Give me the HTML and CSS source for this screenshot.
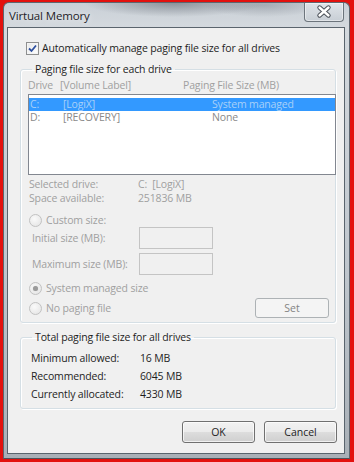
FILE: index.html
```html
<!DOCTYPE html>
<html lang="en">
<head>
  <meta charset="UTF-8">
  <title>Virtual Memory</title>
  <link rel="stylesheet" href="styles.css">
</head>
<body>
  <div class="window">
    <div class="titlebar">
      <span class="title">Virtual Memory</span>
      <span class="close">
        <svg width="38" height="18" viewBox="0 0 38 18">
          <path d="M14.5 4.5 L23.5 12.5 M23.5 4.5 L14.5 12.5" stroke="#4a5058" stroke-width="4.4" stroke-linecap="round"/>
          <path d="M14.5 4.5 L23.5 12.5 M23.5 4.5 L14.5 12.5" stroke="#ffffff" stroke-width="2.4" stroke-linecap="round"/>
        </svg>
      </span>
    </div>

    <div class="client">
      <div class="check-row">
        <span class="checkbox">
          <svg width="11" height="11" viewBox="0 0 11 11">
            <path d="M2 5.5 L4.5 8 L9 2.5" fill="none" stroke="#2d4f9e" stroke-width="1.8"/>
          </svg>
        </span>
        Automatically manage paging file size for all drives
      </div>

      <!-- Paging file per drive -->
      <fieldset class="group drives">
        <legend>Paging file size for each drive</legend>
        <div class="list-head">
          <span class="col-drive">Drive</span>
          <span class="col-label">[Volume Label]</span>
          <span class="col-size">Paging File Size (MB)</span>
        </div>
        <div class="listbox">
          <div class="row selected">
            <span class="cell-drive">C:</span>
            <span class="cell-label">[LogiX]</span>
            <span>System managed</span>
          </div>
          <div class="row">
            <span class="cell-drive">D:</span>
            <span class="cell-label">[RECOVERY]</span>
            <span>None</span>
          </div>
        </div>

        <div class="info">
          <span>Selected drive:</span><span>C:&nbsp; [LogiX]</span>
          <span>Space available:</span><span>251836 MB</span>
        </div>

        <div class="radio-row custom"><span class="radio"></span>Custom size:</div>
        <div class="field-row first"><span class="field-label">Initial size (MB):</span><span class="textbox"></span></div>
        <div class="field-row"><span class="field-label">Maximum size (MB):</span><span class="textbox"></span></div>
        <div class="radio-row managed"><span class="radio checked"></span>System managed size</div>
        <div class="radio-row nopaging">
          <span class="radio"></span>No paging file
          <button class="btn set" disabled>Set</button>
        </div>
      </fieldset>

      <!-- Totals -->
      <fieldset class="group totals">
        <legend>Total paging file size for all drives</legend>
        <div class="totals-grid">
          <span>Minimum allowed:</span><span>16 MB</span>
          <span>Recommended:</span><span>6045 MB</span>
          <span>Currently allocated:</span><span>4330 MB</span>
        </div>
      </fieldset>

      <div class="actions">
        <button class="btn">OK</button>
        <button class="btn">Cancel</button>
      </div>
    </div>
  </div>
</body>
</html>
```

FILE: styles.css
```css
/* Base */
body {
  margin: 0;
  padding: 2px 4px 3px 3px;
  background: #e3110e;
  font-family: 'Open Sans', sans-serif;
  font-size: 10.5px;
  letter-spacing: -0.15px;
  color: #1e1e1e;
}

/* Window frame (Aero-like glass) */
.window {
  width: 347px;
  height: 457px;
  box-sizing: border-box;
  border: 1px solid #5d666f;
  border-bottom-color: #4d555c;
  border-radius: 6px 6px 0 0;
  padding: 0 4px 4px 3px;
  display: flex;
  flex-direction: column;
  background:
    radial-gradient(ellipse 90px 14px at 170px 0, rgba(90,96,104,0.55), transparent),
    radial-gradient(ellipse 60px 12px at 260px 2px, rgba(110,116,124,0.4), transparent),
    linear-gradient(180deg, #c9d0d7 0, #d4d9de 24px, #bfc6cd 60%, #a9b0b7 100%);
}
.titlebar {
  height: 24px;
  display: flex;
  align-items: flex-start;
}
.title {
  padding: 5px 0 0 2px;
  font-size: 11.5px;
  color: #1f2328;
  text-shadow: 0 0 6px rgba(255,255,255,0.9);
}
.close {
  margin-left: auto;
  margin-right: 1px;
  width: 38px;
  height: 18px;
  border: 1px solid #6c747c;
  border-top: none;
  border-radius: 0 0 4px 4px;
  background: linear-gradient(180deg, rgba(240,243,246,0.6), rgba(190,198,206,0.5));
  box-shadow: inset 0 0 0 1px rgba(255,255,255,0.45);
}
.close svg { display: block; }

/* Client area */
.client {
  flex: 1;
  border: 1px solid #5a646d;
  background: #f0f0f0;
  padding: 0 8px 0 12px;
  display: flex;
  flex-direction: column;
}
.check-row {
  margin-top: 13px;
  height: 14px;
  display: flex;
  align-items: center;
  gap: 3px;
  padding-left: 6px;
}
.checkbox {
  width: 11px;
  height: 11px;
  border: 1px solid #8e8f8f;
  background: linear-gradient(135deg, #e8e8e8, #ffffff);
  box-shadow: inset 0 0 0 1px #f4f4f4;
}
.checkbox svg { display: block; }

/* Group boxes */
.group {
  margin: 0;
  padding: 0 0 0 7px;
  border: 1px solid #d5dfe5;
  border-radius: 3px;
  box-shadow: inset 1px 1px 0 #fff, 1px 1px 0 #fff;
  min-width: 0;
}
.group legend {
  margin-left: 4px;
  padding: 0 3px;
  line-height: 14px;
  color: #1e1e1e;
}
.drives { margin-top: 7px; padding-bottom: 4px; }

.list-head, .info, .radio-row, .field-row { color: #a0a0a0; }

.list-head {
  margin-top: 2px;
  line-height: 14px;
  display: flex;
}
.col-drive { width: 32px; }
.col-label { width: 123px; }

.listbox {
  margin-top: 2px;
  width: 306px;
  height: 76px;
  border: 1px solid #828790;
  background: #fff;
  padding-top: 3px;
  box-sizing: content-box;
}
.row {
  display: flex;
  height: 13px;
  line-height: 13px;
  padding-left: 1px;
  color: #8a8a8a;
}
.row.selected {
  background: #3399ff;
  color: #a8d0f8;
}
.cell-drive { width: 33px; }
.cell-label { width: 149px; }

.info {
  margin-top: 2px;
  padding-left: 1px;
  display: grid;
  grid-template-columns: 109px auto;
  line-height: 14px;
}

.radio-row {
  display: flex;
  align-items: center;
  gap: 4px;
  padding-left: 1px;
  height: 14px;
}
.radio-row.custom { margin-top: 8px; }
.radio-row.managed { margin-top: 6px; }
.radio-row.nopaging { margin-top: 3px; height: 20px; }
.radio {
  width: 11px;
  height: 11px;
  border: 1px solid #c2c2c2;
  border-radius: 50%;
  background: radial-gradient(circle at 40% 35%, #fafafa, #e2e2e2);
  display: flex;
  align-items: center;
  justify-content: center;
}
.radio.checked::after {
  content: "";
  width: 5px;
  height: 5px;
  border-radius: 50%;
  background: #9b9b9b;
  box-shadow: 0 0 1px #bbb;
}

.field-row {
  display: flex;
  align-items: center;
  padding-left: 4px;
  height: 22px;
}
.field-row.first { margin-top: 0; }
.field-row + .field-row { margin-top: 4px; }
.field-label { width: 107px; }
.textbox {
  width: 72px;
  height: 20px;
  border: 1px solid #c4c4c4;
  background: #f0f0f0;
}

/* Buttons */
.btn {
  font: inherit;
  color: #1e1e1e;
  height: 22px;
  width: 73px;
  padding: 0;
  border: 1px solid #707070;
  border-radius: 3px;
  background: linear-gradient(180deg, #f2f2f2 0, #ebebeb 50%, #dddddd 51%, #cfcfcf 100%);
  box-shadow: inset 0 0 0 1px rgba(255,255,255,0.7);
}
.btn.set {
  margin-left: auto;
  margin-right: 6px;
  height: 20px;
  width: 74px;
  color: #838383;
  border-color: #adb2b5;
  background: #f4f4f4;
  box-shadow: none;
}

/* Totals */
.totals { margin-top: 7px; padding-bottom: 5px; }
.totals-grid {
  margin-top: 5px;
  padding-left: 3px;
  display: grid;
  grid-template-columns: 109px auto;
  line-height: 18px;
}

.actions {
  margin: 12px -1px 0 0;
  display: flex;
  justify-content: flex-end;
  gap: 9px;
}
```
